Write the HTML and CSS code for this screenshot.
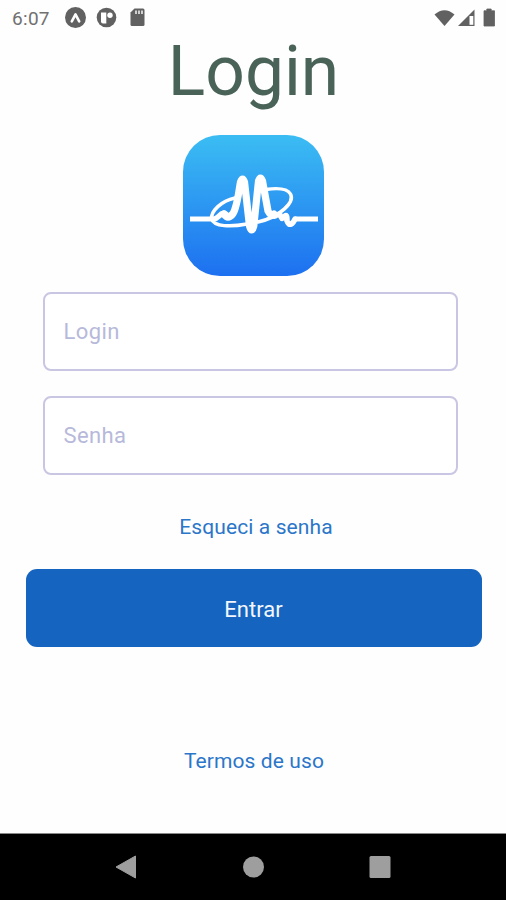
FILE: index.html
```html
<!DOCTYPE html>
<html lang="pt-BR">
<head>
    <meta charset="UTF-8">
    <meta name="viewport" content="width=device-width, initial-scale=1.0">
    <title>Login</title>
    <link rel="stylesheet" href="styles.css">
</head>
<body>
    <header class="status-bar">
        <span class="clock">6:07</span>
        <svg class="status-left" width="84" height="24" viewBox="0 0 84 24">
            <circle cx="11.5" cy="11.5" r="10.5" fill="#616161"/>
            <path d="M7.8 15.3 L11.5 8.3 L15.2 15.3" fill="none" stroke="#fff" stroke-width="2.6" stroke-linecap="round" stroke-linejoin="round"/>
            <circle cx="42.5" cy="11.5" r="9.8" fill="#616161"/>
            <path d="M37 6.5 H42.300 V17.500 H39 Q37 17.500 37 15.500 Z" fill="#fff"/>
            <circle cx="46" cy="9.3" r="2.7" fill="#fff"/>
            <path d="M70.5 2.500 H79 Q80.500 2.500 80.500 4 V18.500 Q80.500 20 79 20 H68 Q66.500 20 66.500 18.500 V6.500 Z" fill="#616161"/>
            <path d="M72 4.500 V8 M75 4.500 V8 M78 4.500 V8" stroke="#ddd" stroke-width="1.800"/>
        </svg>
        <svg class="status-right" width="64" height="20" viewBox="0 0 64 20">
            <path d="M0.500 6.500 Q10.500 -2 20.500 6.500 L10.500 18 Z" fill="#616161"/>
            <path d="M40.500 1.500 V18 H24 Z" fill="#616161"/>
            <path d="M35.500 8 H39.300 V16.800 H35.500 Z" fill="#fff"/>
            <path d="M52.800 1 H57.200 V2.800 H60.500 V18 H50 V2.800 H52.800 Z" fill="#616161" stroke="#616161" stroke-width="0.800" stroke-linejoin="round"/>
        </svg>
    </header>

    <main>
        <h1>Login</h1>

        <svg class="logo" width="141" height="141" viewBox="0 0 141 141">
            <defs>
                <linearGradient id="logoFill" x1="0" y1="0" x2="0" y2="1">
                    <stop offset="0" stop-color="#3bbdf3"/>
                    <stop offset="1" stop-color="#1d70f0"/>
                </linearGradient>
            </defs>
            <rect width="141" height="141" rx="37" fill="url(#logoFill)"/>
            <g fill="none" stroke="#fff" stroke-linecap="round" stroke-linejoin="round">
                <path d="M7 84 H30" stroke-width="5" stroke-linecap="butt"/>
                <path d="M31 84 C35 84 36 79 41 78 C45 80 46 83 49 79" stroke-width="5.500"/>
                <path d="M41 79 C45 85 50 81 52 74 C55 65 56 55 57.500 47 Q59.700 41 61.500 47 L66.500 91 Q68.700 99 70.800 91 L75.500 46 Q77.300 40 79.500 46 L85 76 Q88 82 91 79" stroke-width="7.200"/>
                <path d="M89 80 C93 84 94 77 97 80 C99 82 98 86 102 81 C104 79 104 83 104 86 C106 92 110 89 112 84" stroke-width="5.500"/>
                <path d="M112 84 H135" stroke-width="5" stroke-linecap="butt"/>
                <path d="M52 63 C38 66 28 76 28.500 84 C31 92 48 92 64 89" stroke-width="3.500"/>
                <path d="M75 87 C97 82 112 67 107.500 59 C104 53 93 53 83 54.500" stroke-width="3.500"/>
            </g>
        </svg>

        <form class="login-form">
            <input type="text" placeholder="Login" aria-label="Login">
            <input type="password" placeholder="Senha" aria-label="Senha">
            <a class="forgot" href="#">Esqueci a senha</a>
            <button type="button">Entrar</button>
        </form>

        <a class="terms" href="#">Termos de uso</a>
    </main>

    <nav class="nav-bar">
        <svg width="22" height="24" viewBox="0 0 22 24"><path d="M20.500 1 V23 L1 12 Z" fill="#9e9e9e" stroke="#9e9e9e" stroke-linejoin="round"/></svg>
        <svg width="22" height="22" viewBox="0 0 22 22"><circle cx="11.500" cy="11" r="10.500" fill="#9e9e9e"/></svg>
        <svg width="22" height="22" viewBox="0 0 22 22"><rect x="0.500" width="21" height="22" rx="1.500" fill="#9e9e9e"/></svg>
    </nav>
</body>
</html>
```
FILE: styles.css
```css
* {
    box-sizing: border-box;
}

body {
    display: flex;
    flex-direction: column;
    height: 900px;
    margin: 0;
    background-color: #fefefe;
    font-family: Roboto, sans-serif;
}

.status-bar {
    display: flex;
    align-items: center;
    height: 36px;
    padding: 0 8px 0 12px;
    color: #707070;
}

.clock {
    width: 52px;
    font-size: 19px;
    letter-spacing: 0.3px;
}

.status-right {
    margin-left: auto;
}

main {
    display: flex;
    flex: 1;
    flex-direction: column;
    align-items: center;
}

h1 {
    margin: 0 0 27px;
    padding-left: 1px;
    color: #4a6358;
    font-size: 69.5px;
    font-weight: normal;
    line-height: 72px;
}

.logo {
    flex-shrink: 0;
}

.login-form {
    display: flex;
    flex-direction: column;
    width: 456px;
    margin: 16px 0 0 1px;
}

input {
    height: 79px;
    margin: 0 24px 25px 17px;
    padding: 0 19px;
    border: 2px solid #c8c6e2;
    border-radius: 8px;
    background-color: #fff;
    font-family: inherit;
    font-size: 22px;
    letter-spacing: 0.4px;
}

input::placeholder {
    color: #b7b9da;
}

a {
    color: #2b76c9;
    font-size: 21px;
    line-height: 26px;
    letter-spacing: 0.1px;
    text-decoration: none;
}

.forgot {
    align-self: center;
    margin-top: 14px;
    padding-left: 5px;
}

button {
    height: 78px;
    margin-top: 29px;
    padding-top: 3px;
    border: none;
    border-radius: 11px;
    background-color: #1565c0;
    color: #f3f6fc;
    font-family: inherit;
    font-size: 22px;
    cursor: pointer;
}

.terms {
    margin-top: 101px;
    padding-left: 2px;
}

.nav-bar {
    display: flex;
    align-items: center;
    justify-content: space-between;
    height: 67px;
    padding: 0 115px;
    border-top: 1px solid #888;
    background-color: #000;
}
```
